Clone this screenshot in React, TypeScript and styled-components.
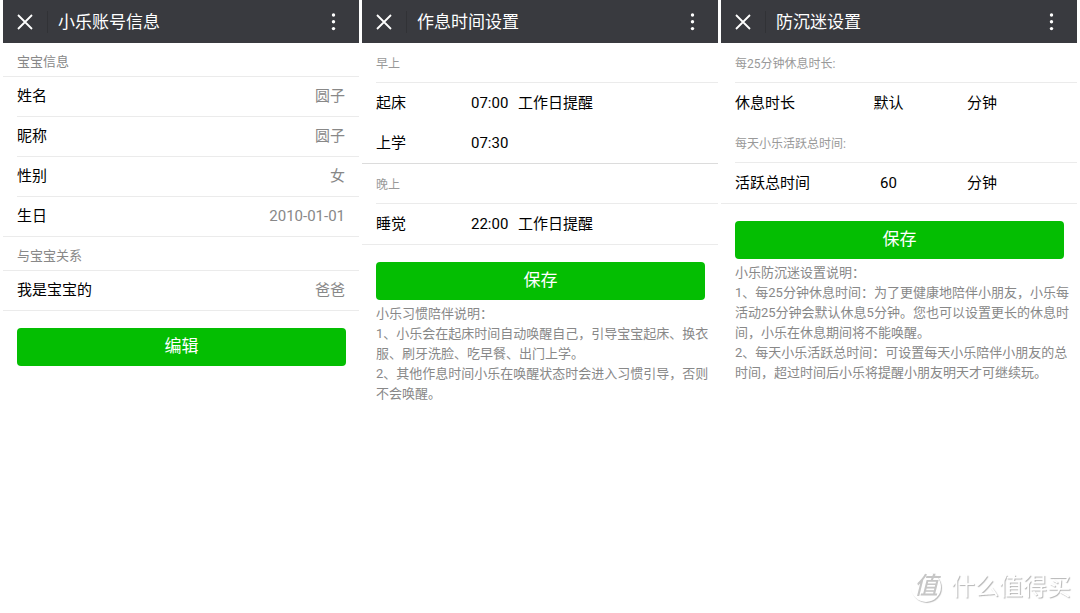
import React from "react";
import styled, { createGlobalStyle } from "styled-components";

const GlobalStyle = createGlobalStyle`
  * { box-sizing: border-box; }
  body {
    margin: 0;
    background: #fff;
    color: #000;
    font-family: Roboto, "Noto Sans CJK SC", sans-serif;
    font-size: 15px;
  }
`;

const Page = styled.main`
  display: grid;
  grid-template-columns: repeat(3, 1fr);
  gap: 3px;
  min-height: 100vh;
  padding: 0 3px;
`;

const Panel = styled.section`
  display: flex;
  flex-direction: column;
  min-width: 0;
`;

const Header = styled.header`
  display: flex;
  align-items: center;
  height: 43px;
  padding: 0 16px 0 11px;
  background: #393a3f;
  color: #fff;
`;

const IconButton = styled.button`
  display: flex;
  padding: 0;
  border: 0;
  background: none;
  color: inherit;
`;

const Divider = styled.span`
  width: 1px;
  height: 22px;
  margin: 0 10px 0 11px;
  background: #313236;
`;

const Title = styled.h1`
  flex: 1;
  margin: 0;
  font-size: 17px;
  font-weight: 400;
  line-height: 24px;
`;

const GroupTitle = styled.h2<{ $small?: boolean }>`
  height: ${(p) => (p.$small ? 39 : 33)}px;
  margin: 0;
  padding-left: 14px;
  color: ${(p) => (p.$small ? "#999" : "#888")};
  font-size: ${(p) => (p.$small ? 12 : 13)}px;
  font-weight: 400;
  line-height: ${(p) => (p.$small ? 42 : 38)}px;
`;

const List = styled.dl`
  margin: 0;
  border-top: 1px solid #ebebeb;
`;

const InfoRow = styled.div`
  display: flex;
  justify-content: space-between;
  margin-left: 14px;
  padding-right: 14px;
  line-height: 39px;
  & + & { border-top: 1px solid #ebebeb; }
`;

const Term = styled.dt``;

const Value = styled.dd`
  margin: 0;
  color: #888;
`;

const Rule = styled.hr<{ $strong?: boolean }>`
  width: 100%;
  height: 1px;
  margin: 0;
  border: 0;
  background: ${(p) => (p.$strong ? "#dcdcdc" : "#ebebeb")};
`;

const Fields = styled.div`
  margin-left: 14px;
  border-top: 1px solid #ebebeb;
`;

const FieldRow = styled.div<{ $columns: string; $gap: number }>`
  display: grid;
  grid-template-columns: ${(p) => p.$columns};
  column-gap: ${(p) => p.$gap}px;
  align-items: center;
  height: 40px;
  line-height: 22px;
  white-space: nowrap;
`;

const Input = styled.input<{ $center?: boolean }>`
  width: 100%;
  height: 22px;
  padding: 0;
  border: 0;
  background: none;
  color: inherit;
  font: inherit;
  text-align: ${(p) => (p.$center ? "center" : "left")};
`;

const Select = styled.select`
  width: 100%;
  height: 22px;
  padding: 0;
  border: 0;
  background: none;
  color: inherit;
  font: inherit;
  appearance: none;
  text-align: center;
  text-align-last: center;
`;

const Submit = styled.button`
  height: 38px;
  margin: 17px 13px 0 14px;
  padding: 0 0 5px;
  border: 0;
  border-radius: 4px;
  background: #04be02;
  color: #fff;
  font: inherit;
  font-size: 17px;
`;

const Notes = styled.div`
  padding: 4px 6px 0 14px;
  color: #888;
  font-size: 13px;
  line-height: 20px;
`;

const Note = styled.p`
  margin: 0;
`;

const Watermark = styled.div`
  position: fixed;
  right: 9px;
  bottom: 8px;
  display: flex;
  align-items: center;
  gap: 10px;
  color: #fff;
  font-size: 24px;
  line-height: 36px;
  text-shadow: 1px 1px 1px #b4b4b4;
`;

const Seal = styled.span`
  width: 30px;
  height: 30px;
  border-radius: 50%;
  box-shadow: 1px 1px 1px #bbb;
  color: #c6c6c6;
  font-style: italic;
  font-weight: 500;
  line-height: 28px;
  text-align: center;
  text-shadow: none;
`;

function TopBar({ title }: { title: string }) {
  return (
    <Header>
      <IconButton type="button" aria-label="关闭">
        <svg width="22" height="22" viewBox="0 0 22 22" fill="none" stroke="currentColor" strokeWidth="1.8">
          <path d="M4 4 18 18M18 4 4 18" />
        </svg>
      </IconButton>
      <Divider />
      <Title>{title}</Title>
      <IconButton type="button" aria-label="更多">
        <svg width="20" height="22" viewBox="0 0 20 22" fill="currentColor">
          <circle cx="10.5" cy="4" r="1.7" />
          <circle cx="10.5" cy="10.8" r="1.7" />
          <circle cx="10.5" cy="17.6" r="1.7" />
        </svg>
      </IconButton>
    </Header>
  );
}

function Info({ rows }: { rows: [string, string][] }) {
  return (
    <List>
      {rows.map(([term, value]) => (
        <InfoRow key={term}>
          <Term>{term}</Term>
          <Value>{value}</Value>
        </InfoRow>
      ))}
    </List>
  );
}

function TimeRow({ id, label, time, note }: { id: string; label: string; time: string; note?: string }) {
  return (
    <FieldRow $columns="86px 38px 1fr" $gap={9}>
      <label htmlFor={id}>{label}</label>
      <Input id={id} defaultValue={time} />
      <span>{note}</span>
    </FieldRow>
  );
}

export default function App() {
  return (
    <>
      <GlobalStyle />
      <Page>
        <Panel>
          <TopBar title="小乐账号信息" />
          <GroupTitle>宝宝信息</GroupTitle>
          <Info rows={[["姓名", "圆子"], ["昵称", "圆子"], ["性别", "女"], ["生日", "2010-01-01"]]} />
          <Rule />
          <GroupTitle>与宝宝关系</GroupTitle>
          <Info rows={[["我是宝宝的", "爸爸"]]} />
          <Rule />
          <Submit type="button">编辑</Submit>
        </Panel>

        <Panel>
          <TopBar title="作息时间设置" />
          <GroupTitle $small>早上</GroupTitle>
          <Fields>
            <TimeRow id="wake" label="起床" time="07:00" note="工作日提醒" />
            <TimeRow id="school" label="上学" time="07:30" />
          </Fields>
          <Rule $strong />
          <GroupTitle $small>晚上</GroupTitle>
          <Fields>
            <TimeRow id="sleep" label="睡觉" time="22:00" note="工作日提醒" />
          </Fields>
          <Rule />
          <Submit type="button">保存</Submit>
          <Notes>
            <Note>小乐习惯陪伴说明：</Note>
            <Note>1、小乐会在起床时间自动唤醒自己，引导宝宝起床、换衣服、刷牙洗脸、吃早餐、出门上学。</Note>
            <Note>2、其他作息时间小乐在唤醒状态时会进入习惯引导，否则不会唤醒。</Note>
          </Notes>
        </Panel>

        <Panel>
          <TopBar title="防沉迷设置" />
          <GroupTitle $small>每25分钟休息时长:</GroupTitle>
          <Fields>
            <FieldRow $columns="75px 81px 1fr" $gap={38}>
              <label htmlFor="rest">休息时长</label>
              <Select id="rest" defaultValue="默认">
                <option>默认</option>
              </Select>
              <span>分钟</span>
            </FieldRow>
          </Fields>
          <GroupTitle $small>每天小乐活跃总时间:</GroupTitle>
          <Fields>
            <FieldRow $columns="75px 81px 1fr" $gap={38}>
              <label htmlFor="active">活跃总时间</label>
              <Input id="active" $center defaultValue="60" />
              <span>分钟</span>
            </FieldRow>
          </Fields>
          <Rule />
          <Submit type="button">保存</Submit>
          <Notes>
            <Note>小乐防沉迷设置说明：</Note>
            <Note>1、每25分钟休息时间：为了更健康地陪伴小朋友，小乐每活动25分钟会默认休息5分钟。您也可以设置更长的休息时间，小乐在休息期间将不能唤醒。</Note>
            <Note>2、每天小乐活跃总时间：可设置每天小乐陪伴小朋友的总时间，超过时间后小乐将提醒小朋友明天才可继续玩。</Note>
          </Notes>
        </Panel>
      </Page>
      <Watermark>
        <Seal>值</Seal>
        <span>什么值得买</span>
      </Watermark>
    </>
  );
}
